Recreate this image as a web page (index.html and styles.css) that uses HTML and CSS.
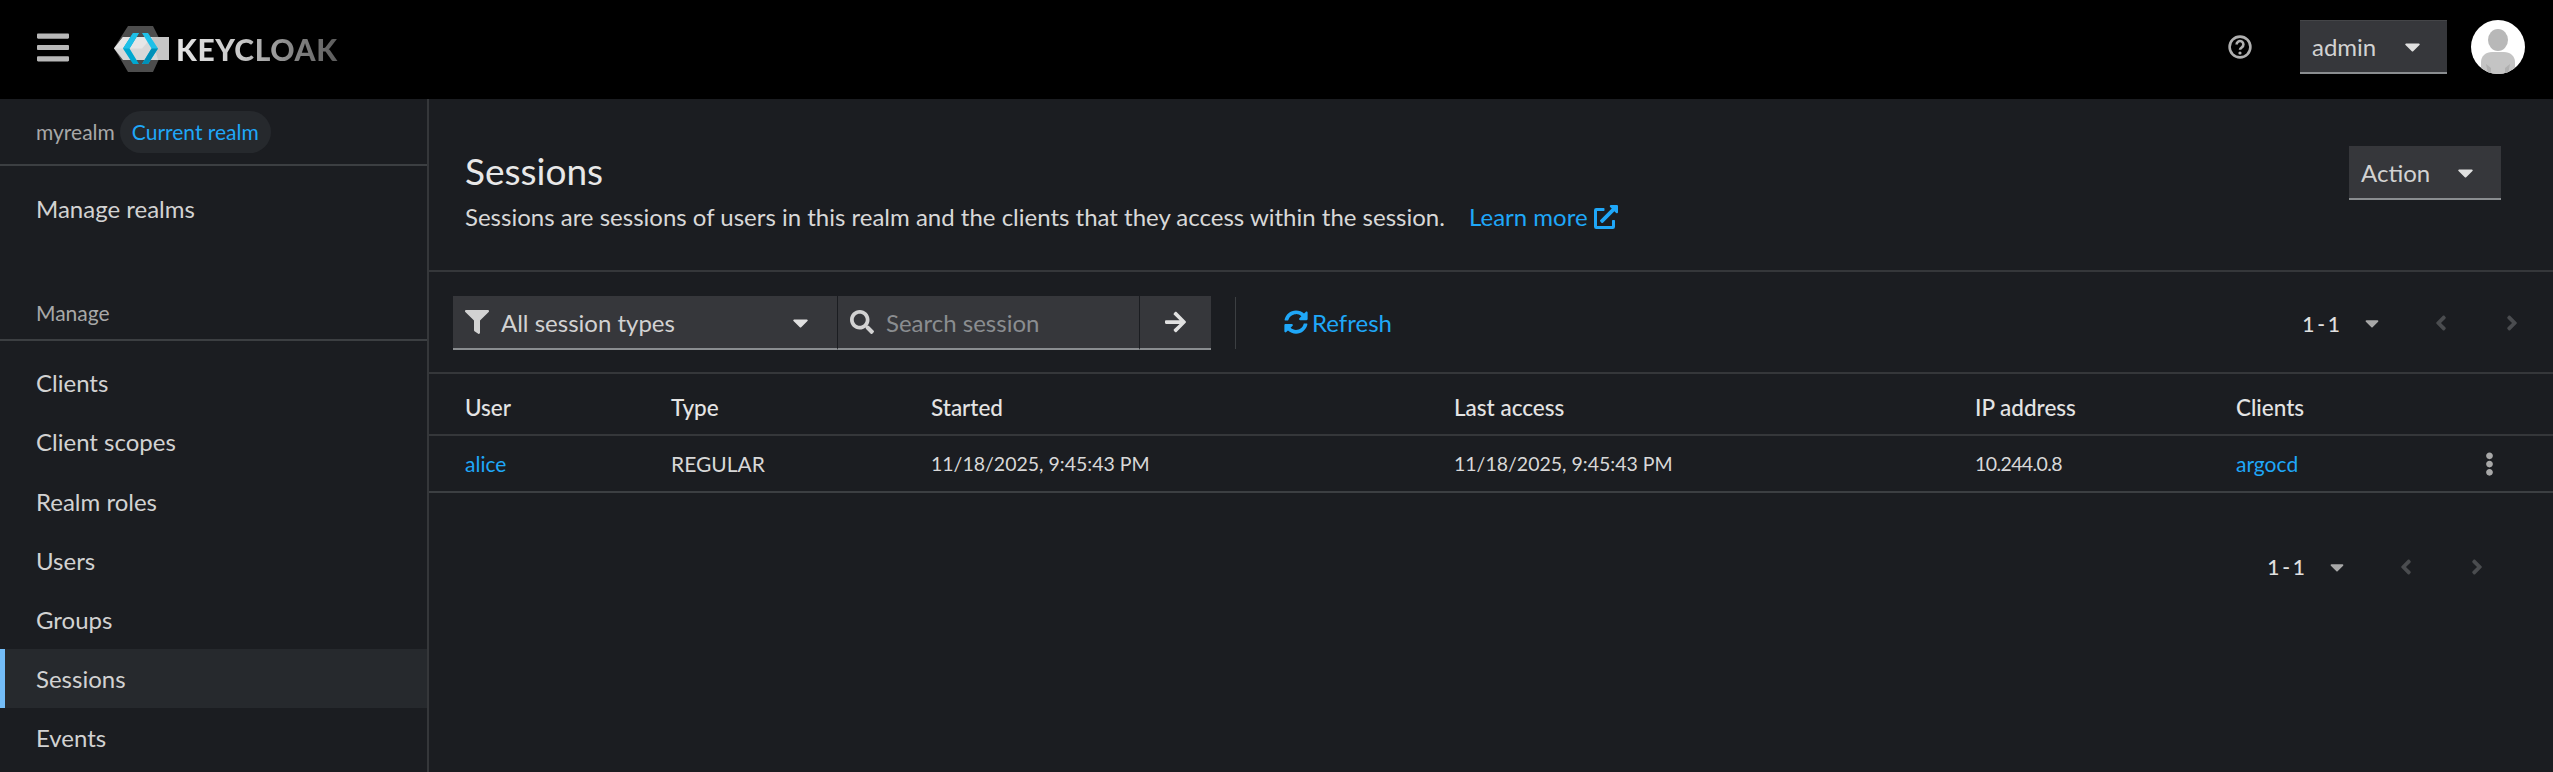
FILE: index.html
```html
<!DOCTYPE html>
<html lang="en">
<head>
<meta charset="utf-8">
<title>Sessions - Keycloak</title>
<link rel="stylesheet" href="styles.css">
</head>
<body>
<svg class="defs" width="0" height="0" aria-hidden="true">
  <symbol id="i-bars" viewBox="0 0 448 512"><path d="M16 132h416c8.837 0 16-7.163 16-16V76c0-8.837-7.163-16-16-16H16C7.163 60 0 67.163 0 76v40c0 8.837 7.163 16 16 16zm0 160h416c8.837 0 16-7.163 16-16v-40c0-8.837-7.163-16-16-16H16c-8.837 0-16 7.163-16 16v40c0 8.837 7.163 16 16 16zm0 160h416c8.837 0 16-7.163 16-16v-40c0-8.837-7.163-16-16-16H16c-8.837 0-16 7.163-16 16v40c0 8.837 7.163 16 16 16z"/></symbol>
  <symbol id="i-caret" viewBox="0 0 320 512"><path d="M31.3 192h257.3c17.8 0 26.7 21.5 14.1 34.1L174.1 354.8c-7.8 7.8-20.5 7.8-28.3 0L17.2 226.1C4.6 213.5 13.5 192 31.3 192z"/></symbol>
  <symbol id="i-filter" viewBox="0 0 512 512"><path d="M487.976 0H24.028C2.71 0-8.047 25.866 7.058 40.971L192 225.941V432c0 7.831 3.821 15.17 10.237 19.662l80 55.98C298.02 518.69 320 507.493 320 487.98V225.941l184.947-184.97C520.021 25.896 509.338 0 487.976 0z"/></symbol>
  <symbol id="i-search" viewBox="0 0 512 512"><path d="M505 442.7L405.3 343c-4.5-4.5-10.6-7-17-7H372c27.6-35.3 44-79.7 44-128C416 93.1 322.9 0 208 0S0 93.1 0 208s93.1 208 208 208c48.3 0 92.7-16.4 128-44v16.3c0 6.4 2.5 12.5 7 17l99.7 99.7c9.4 9.4 24.6 9.4 33.9 0l28.3-28.3c9.4-9.4 9.4-24.6.1-34zM208 336c-70.7 0-128-57.2-128-128 0-70.7 57.2-128 128-128 70.7 0 128 57.2 128 128 0 70.7-57.2 128-128 128z"/></symbol>
  <symbol id="i-arrow" viewBox="0 0 448 512"><path d="M190.5 66.9l22.2-22.2c9.4-9.4 24.6-9.4 33.9 0L441 239c9.4 9.4 9.4 24.6 0 33.9L246.6 467.3c-9.4 9.4-24.6 9.4-33.9 0l-22.2-22.2c-9.5-9.5-9.3-25 .4-34.3L311.4 296H24c-13.3 0-24-10.7-24-24v-32c0-13.3 10.7-24 24-24h287.4L190.9 101.2c-9.8-9.3-10-24.8-.4-34.3z"/></symbol>
  <symbol id="i-sync" viewBox="0 0 512 512"><path d="M370.72 133.28C339.458 104.008 298.888 87.962 255.848 88c-77.458.068-144.328 53.178-162.791 126.85-1.344 5.363-6.122 9.15-11.651 9.15H24.103c-7.498 0-13.194-6.807-11.807-14.176C33.933 94.924 134.813 8 256 8c66.448 0 126.791 26.136 171.315 68.685L463.03 40.97C478.149 25.851 504 36.559 504 57.941V192c0 13.255-10.745 24-24 24H345.941c-21.382 0-32.09-25.851-16.971-40.971l41.75-41.749zM32 296h134.059c21.382 0 32.09 25.851 16.971 40.971l-41.75 41.75c31.262 29.273 71.835 45.319 114.876 45.28 77.418-.07 144.315-53.144 162.787-126.849 1.344-5.363 6.122-9.15 11.651-9.15h57.304c7.498 0 13.194 6.807 11.807 14.176C478.067 417.076 377.187 504 256 504c-66.448 0-126.791-26.136-171.315-68.685L48.97 471.03C33.851 486.149 8 475.441 8 454.059V320c0-13.255 10.745-24 24-24z"/></symbol>
  <symbol id="i-ext" viewBox="0 0 512 512"><path d="M432,320H400a16,16,0,0,0-16,16V448H64V128H208a16,16,0,0,0,16-16V80a16,16,0,0,0-16-16H48A48,48,0,0,0,0,112V464a48,48,0,0,0,48,48H400a48,48,0,0,0,48-48V336A16,16,0,0,0,432,320ZM488,0h-128c-21.37,0-32.05,25.91-17,41l35.73,35.73L135,320.37a24,24,0,0,0,0,34L157.67,377a24,24,0,0,0,34,0L435.28,133.32,471,169c15,15,41,4.5,41-17V24A24,24,0,0,0,488,0Z"/></symbol>
  <symbol id="i-kebab" viewBox="0 0 192 512"><path d="M96 184c39.8 0 72 32.2 72 72s-32.2 72-72 72-72-32.2-72-72 32.2-72 72-72zM24 80c0 39.8 32.2 72 72 72s72-32.2 72-72S135.8 8 96 8 24 40.2 24 80zm0 352c0 39.8 32.2 72 72 72s72-32.2 72-72-32.2-72-72-72-72 32.2-72 72z"/></symbol>
  <symbol id="i-left" viewBox="0 0 256 512"><path d="M31.7 239l136-136c9.4-9.4 24.6-9.4 33.9 0l22.6 22.6c9.4 9.4 9.4 24.6 0 33.9L127.9 256l96.4 96.4c9.4 9.4 9.4 24.6 0 33.9L201.7 409c-9.4 9.4-24.6 9.4-33.9 0l-136-136c-9.5-9.4-9.5-24.6-.1-34z"/></symbol>
  <symbol id="i-right" viewBox="0 0 256 512"><path d="M224.3 273l-136 136c-9.4 9.4-24.6 9.4-33.9 0l-22.6-22.6c-9.4-9.4-9.4-24.6 0-33.9l96.4-96.4-96.4-96.4c-9.4-9.4-9.4-24.6 0-33.9L54.3 103c9.4-9.4 24.6-9.4 33.9 0l136 136c9.5 9.4 9.5 24.6.1 34z"/></symbol>
</svg>

<header class="masthead">
  <button class="icon-btn burger" aria-label="Navigation"><svg class="ic-burger"><use href="#i-bars"/></svg></button>
  <div class="logo">
    <svg class="logo-mark" viewBox="0 0 60 50" aria-hidden="true">
      <polygon points="2,24 16,2 41,2 52,24 41,48 16,48" fill="#4d4d4d"/>
      <polygon points="2,24.500 11,13 57,13 57,36 11,36" fill="#d8d8d8"/>
      <polygon points="11,13 40,13 30,24.500 2,24.500" fill="#e6e6e6"/>
      <polygon points="40,13 57,13 57,36 46,36" fill="#c6c6c6"/>
      <polygon points="21,9 27,9 17.500,24.500 27,40 21,40 11,24.500" fill="#00a8d0"/>
      <polygon points="21,9 27,9 17.500,24.500 11,24.500" fill="#1fc0e8"/>
      <polygon points="30,9 36,9 46,24.500 36,40 30,40 39.500,24.500" fill="#1fc0e8"/>
      <polygon points="30,40 36,40 46,24.500 39.500,24.500" fill="#0090b8"/>
    </svg>
    <span class="logo-text">KEYCLOAK</span>
  </div>
  <div class="mast-tools">
    <svg class="help" viewBox="0 0 24 24" aria-label="Help"><circle cx="12" cy="12" r="10.400" fill="none" stroke="#b0b0b0" stroke-width="2.600"/><path d="M8.600 9.500a3.400 3.400 0 1 1 5.200 2.800c-1.100.7-1.800 1.200-1.800 2.400" fill="none" stroke="#b0b0b0" stroke-width="2.600"/><circle cx="12" cy="18" r="1.600" fill="#b0b0b0"/></svg>
    <button class="select user-select"><span>admin</span><svg class="caret"><use href="#i-caret"/></svg></button>
    <svg class="avatar" viewBox="0 0 54 54" aria-label="Avatar">
      <defs><clipPath id="av"><circle cx="27" cy="27" r="27"/></clipPath></defs>
      <g clip-path="url(#av)">
        <rect width="54" height="54" fill="#fff"/>
        <ellipse cx="27" cy="20" rx="10" ry="11" fill="#b8b8b8"/>
        <path d="M10 54V42c0-6 5-10 11-10h12c6 0 11 4 11 10v12z" fill="#c4c4c4"/>
        <path d="M17 54l-2-10 5 4v6zM37 54l2-10-5 4v6z" fill="#b0b0b0"/>
      </g>
    </svg>
  </div>
</header>

<div class="shell">
  <nav class="sidebar">
    <div class="realm"><span class="realm-name">myrealm</span><span class="badge">Current realm</span></div>
    <a class="nav-link nav-manage">Manage realms</a>
    <div class="nav-section">Manage</div>
    <a class="nav-link">Clients</a>
    <a class="nav-link">Client scopes</a>
    <a class="nav-link">Realm roles</a>
    <a class="nav-link">Users</a>
    <a class="nav-link">Groups</a>
    <a class="nav-link is-current">Sessions</a>
    <a class="nav-link">Events</a>
  </nav>

  <main class="content">
    <section class="page-head">
      <div>
        <h1>Sessions</h1>
        <p class="lede">Sessions are sessions of users in this realm and the clients that they access within the session. <a class="learn">Learn more <svg class="ic-ext"><use href="#i-ext"/></svg></a></p>
      </div>
      <button class="select action-select"><span>Action</span><svg class="caret"><use href="#i-caret"/></svg></button>
    </section>

    <section class="toolbar">
      <div class="search-group">
        <button class="select type-select"><svg class="ic-filter"><use href="#i-filter"/></svg><span class="type-label">All session types</span><svg class="caret"><use href="#i-caret"/></svg></button>
        <div class="select search-box"><svg class="ic-search"><use href="#i-search"/></svg><span class="placeholder">Search session</span></div>
        <button class="select go"><svg class="ic-arrow"><use href="#i-arrow"/></svg></button>
      </div>
      <span class="vsep"></span>
      <a class="refresh"><svg class="ic-sync"><use href="#i-sync"/></svg>Refresh</a>
      <div class="pager pager-top">
        <span class="pager-count">1 - 1</span><svg class="pager-caret"><use href="#i-caret"/></svg>
        <svg class="pager-arrow prev"><use href="#i-left"/></svg><svg class="pager-arrow next"><use href="#i-right"/></svg>
      </div>
    </section>

    <table class="sessions">
      <colgroup><col class="c-user"><col class="c-type"><col class="c-start"><col class="c-last"><col class="c-ip"><col class="c-clients"><col></colgroup>
      <thead>
        <tr><th>User</th><th>Type</th><th>Started</th><th>Last access</th><th>IP address</th><th>Clients</th><th></th></tr>
      </thead>
      <tbody>
        <tr>
          <td><a class="link">alice</a></td><td>REGULAR</td><td class="num">11/18/2025, 9:45:43 PM</td><td class="num">11/18/2025, 9:45:43 PM</td><td class="num ip">10.244.0.8</td><td><a class="link">argocd</a></td>
          <td class="kebab-cell"><svg class="ic-kebab"><use href="#i-kebab"/></svg></td>
        </tr>
      </tbody>
    </table>

    <div class="pager pager-bottom">
      <span class="pager-count">1 - 1</span><svg class="pager-caret"><use href="#i-caret"/></svg>
      <svg class="pager-arrow prev"><use href="#i-left"/></svg><svg class="pager-arrow next"><use href="#i-right"/></svg>
    </div>
  </main>
</div>
</body>
</html>
```
FILE: styles.css
```css
* { box-sizing: border-box; }
html, body { height: 100%; }
body {
  margin: 0;
  height: 772px;
  overflow: hidden;
  display: flex;
  flex-direction: column;
  background: #1b1d21;
  color: #e0e0e0;
  font-family: "Lato", "Open Sans", sans-serif;
  font-size: 24px;
}
.defs { position: absolute; }
svg { display: block; fill: currentColor; flex: none; }
button { font: inherit; color: inherit; border: 0; padding: 0; background: none; }

.masthead {
  height: 99px;
  flex: none;
  background: #000;
  display: flex;
  align-items: center;
  padding-left: 37px;
}
.burger { color: #b8b8b8; margin-bottom: 4px; }
.ic-burger { width: 32px; height: 37px; }
.logo { display: flex; align-items: center; margin-left: 43px; margin-top: -1px; }
.logo-mark { width: 60px; height: 50px; }
.logo-text {
  margin-left: 4px;
  font-family: "Lato", sans-serif;
  font-weight: 900;
  font-size: 30px;
  line-height: 1;
  letter-spacing: 0.6px;
  background: linear-gradient(90deg, #e4e4e4 0%, #c8c8c8 40%, #8c8c8c 68%, #5c5c5c 100%);
  -webkit-background-clip: text;
  background-clip: text;
  color: transparent;
}
.mast-tools { margin-left: auto; margin-bottom: 5px; display: flex; align-items: center; padding-right: 28px; }
.help { width: 24px; height: 24px; }
.select {
  display: flex;
  align-items: center;
  background: #36373b;
  border-bottom: 2px solid #8a8d90;
  color: #d2d2d2;
}
.caret { width: 25px; height: 25px; color: #e0e0e0; }
.user-select { width: 147px; height: 54px; margin-left: 48px; padding-left: 12px; gap: 24px; border-top: 1px solid #444548; }
.avatar { width: 54px; height: 54px; margin-left: 24px; }

.shell { flex: 1; display: flex; min-height: 0; }
.sidebar { width: 429px; flex: none; border-right: 2px solid #35373a; overflow: hidden; }
.realm {
  height: 67px;
  border-bottom: 2px solid #3c3f42;
  display: flex;
  align-items: center;
  padding-left: 36px;
  font-size: 21px;
  color: #a8a8a8;
}
.badge {
  margin-left: 5px;
  height: 42px;
  display: flex;
  align-items: center;
  padding: 0 12px;
  border-radius: 21px;
  background: #26292d;
  color: #1fa7f8;
}
.nav-link {
  display: flex;
  align-items: center;
  height: 59.200px;
  padding-left: 36px;
  color: #d2d2d2;
}
.nav-manage { margin-top: 13px; }
.nav-section {
  margin-top: 54px;
  height: 49px;
  border-bottom: 2px solid #3c3f42;
  padding: 8px 0 0 36px;
  font-size: 21px;
  color: #a8a8a8;
  margin-bottom: 12px;
}
.is-current { background: #26292d; box-shadow: inset 5px 0 0 #73bcf7; }

.content { flex: 1; min-width: 0; }
.page-head {
  height: 173px;
  border-bottom: 2px solid #35373a;
  display: flex;
  justify-content: space-between;
  align-items: flex-start;
  padding: 47px 52px 0 36px;
}
h1 { margin: 3px 0 0; font-size: 37px; font-weight: 400; line-height: 44px; color: #e8e8e8; }
.lede { margin: 9px 0 0; line-height: 30px; color: #d8d8d8; }
.learn { margin-left: 18px; color: #1fa7f8; white-space: nowrap; }
.ic-ext { display: inline-block; width: 24px; height: 24px; vertical-align: -3px; color: #1fa7f8; }
.action-select { width: 152px; height: 54px; padding-left: 12px; gap: 23px; flex: none; }

.toolbar { height: 102px; display: flex; align-items: center; padding: 2px 35px 0 24px; border-bottom: 2px solid #35373a; }
.search-group { display: flex; }
.type-select { width: 385px; height: 54px; padding: 0 24px 0 12px; border-right: 1px solid #1b1d21; }
.ic-filter { width: 24px; height: 24px; color: #d2d2d2; }
.type-label { margin-left: 12px; flex: 1; text-align: left; }
.search-box { width: 302px; height: 54px; padding-left: 12px; border-right: 1px solid #1b1d21; }
.ic-search { width: 24px; height: 24px; color: #d2d2d2; }
.placeholder { margin-left: 12px; color: #8a8d90; }
.go { width: 71px; height: 54px; justify-content: center; }
.ic-arrow { width: 23px; height: 24px; color: #e0e0e0; }
.vsep { width: 1px; height: 52px; background: #3c3f42; margin-left: 24px; }
.refresh { display: flex; align-items: center; gap: 4px; margin: 0 0 2px 48px; color: #1fa7f8; }
.ic-sync { width: 24px; height: 24px; }

.pager { display: flex; align-items: center; }
.pager-top { margin-left: auto; }
.pager-count { font-size: 21px; font-weight: 500; word-spacing: -2.500px; color: #e0e0e0; }
.pager-caret { width: 14px; height: 22px; margin-left: 25px; color: #a8a8a8; }
.pager-arrow { width: 12px; height: 24px; color: #4a4c4f; }
.prev { margin-left: 56px; }
.next { margin-left: 59px; }
.pager-bottom { justify-content: flex-end; padding: 0 70px 0 0; margin-top: 61px; }

.sessions { width: 100%; table-layout: fixed; border-collapse: collapse; font-size: 21px; }
.c-user { width: 206px; }
.c-type { width: 260px; }
.c-start { width: 523px; }
.c-last { width: 521px; }
.c-ip { width: 261px; }
.c-clients { width: 252px; }
th, td { text-align: left; padding: 0 0 0 36px; color: #d8d8d8; }
th { height: 61px; padding-top: 6px; font-size: 22.500px; font-weight: 500; color: #e4e4e4; border-bottom: 2px solid #35373a; }
td { height: 57px; border-bottom: 2px solid #3c3f42; }
.num { font-size: 19.500px; }
.ip { letter-spacing: -0.6px; }
.link { color: #1fa7f8; }
.kebab-cell { padding: 0 0 0 33px; }
.ic-kebab { width: 9px; height: 24px; color: #a8a8a8; }
```
